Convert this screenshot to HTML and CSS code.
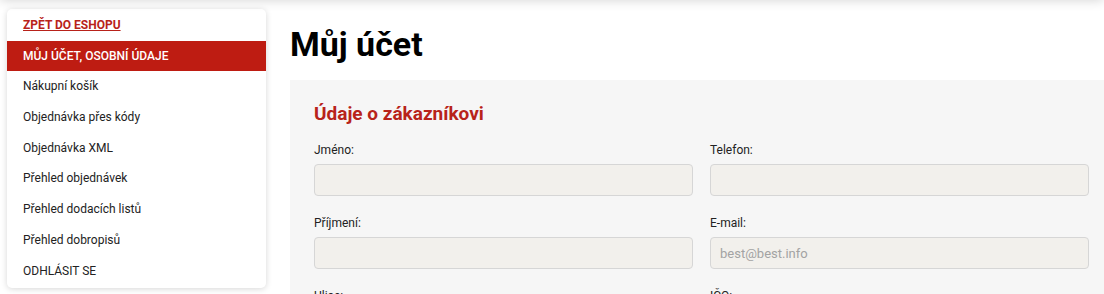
FILE: index.html
```html
<!DOCTYPE html>
<html lang="cs">
<head>
    <meta charset="UTF-8">
    <meta name="viewport" content="width=device-width, initial-scale=1.0">
    <title>Můj účet</title>
    <link rel="stylesheet" href="styles.css">
</head>
<body>
    <div class="top-shadow"></div>
    <div class="page">
        <aside class="sidebar">
            <a href="#" class="back">ZPĚT DO ESHOPU</a>
            <a href="#" class="active">MŮJ ÚČET, OSOBNÍ ÚDAJE</a>
            <a href="#">Nákupní košík</a>
            <a href="#">Objednávka přes kódy</a>
            <a href="#">Objednávka XML</a>
            <a href="#">Přehled objednávek</a>
            <a href="#">Přehled dodacích listů</a>
            <a href="#">Přehled dobropisů</a>
            <a href="#">ODHLÁSIT SE</a>
        </aside>

        <main>
            <h1>Můj účet</h1>
            <section class="panel">
                <h2>Údaje o zákazníkovi</h2>
                <div class="form-grid">
                    <div class="field">
                        <label>Jméno:</label>
                        <input type="text">
                    </div>
                    <div class="field">
                        <label>Telefon:</label>
                        <input type="text">
                    </div>
                    <div class="field">
                        <label>Příjmení:</label>
                        <input type="text">
                    </div>
                    <div class="field">
                        <label>E-mail:</label>
                        <input type="text" placeholder="best@best.info">
                    </div>
                    <div class="field">
                        <label>Ulice:</label>
                        <input type="text">
                    </div>
                    <div class="field">
                        <label>IČO:</label>
                        <input type="text">
                    </div>
                </div>
            </section>
        </main>
    </div>
</body>
</html>
```

FILE: styles.css
```css
html, body {
    margin: 0;
    padding: 0;
    height: 100%;
    overflow: hidden;
}

body {
    font-family: Roboto, "Liberation Sans", sans-serif;
    background-color: #ffffff;
    color: #1a1a1a;
    position: relative;
}

.top-shadow {
    position: absolute;
    top: -20px;
    left: 0;
    right: 0;
    height: 20px;
    box-shadow: 0 0 12px rgba(0, 0, 0, 0.18);
    z-index: 5;
}

.page {
    display: flex;
    align-items: flex-start;
    gap: 24px;
    padding: 9px 0 0 7px;
    width: 1130px;
}

.sidebar {
    width: 259px;
    flex-shrink: 0;
    background-color: #ffffff;
    border-radius: 5px;
    box-shadow: 0 1px 6px rgba(0, 0, 0, 0.16);
    padding: 0 0 2px;
    display: flex;
    flex-direction: column;
}

.sidebar a {
    display: block;
    height: 30.7px;
    line-height: 30.7px;
    padding: 0 16px;
    font-size: 12px;
    color: #222222;
    text-decoration: none;
}

.sidebar a.back {
    color: #b8221a;
    font-weight: 700;
    text-decoration: underline;
    padding-top: 1px;
}

.sidebar a.active {
    background-color: #be1c12;
    color: #ffffff;
    font-weight: 500;
}

main {
    width: 823px;
    flex-shrink: 0;
}

h1 {
    margin: 17px 0 17px;
    font-size: 34px;
    line-height: 37px;
    font-weight: 700;
    color: #000000;
}

.panel {
    background-color: #f6f6f6;
    padding: 22px 24px 24px;
}

h2 {
    margin: 0 0 17px;
    font-size: 19px;
    line-height: 24px;
    font-weight: 700;
    color: #b8231a;
}

.form-grid {
    display: grid;
    grid-template-columns: 379px 379px;
    column-gap: 17px;
    row-gap: 20px;
}

.field label {
    display: block;
    font-size: 12px;
    line-height: 14px;
    color: #222222;
    margin-bottom: 7px;
}

.field input {
    display: block;
    box-sizing: border-box;
    width: 100%;
    height: 32px;
    padding: 0 9px;
    font-family: Roboto, "Liberation Sans", sans-serif;
    font-size: 13px;
    background-color: #f2f0ec;
    border: 1px solid #d6d6d6;
    border-radius: 4px;
    outline: none;
}

.field input::placeholder {
    color: #a3a3a3;
}
```
